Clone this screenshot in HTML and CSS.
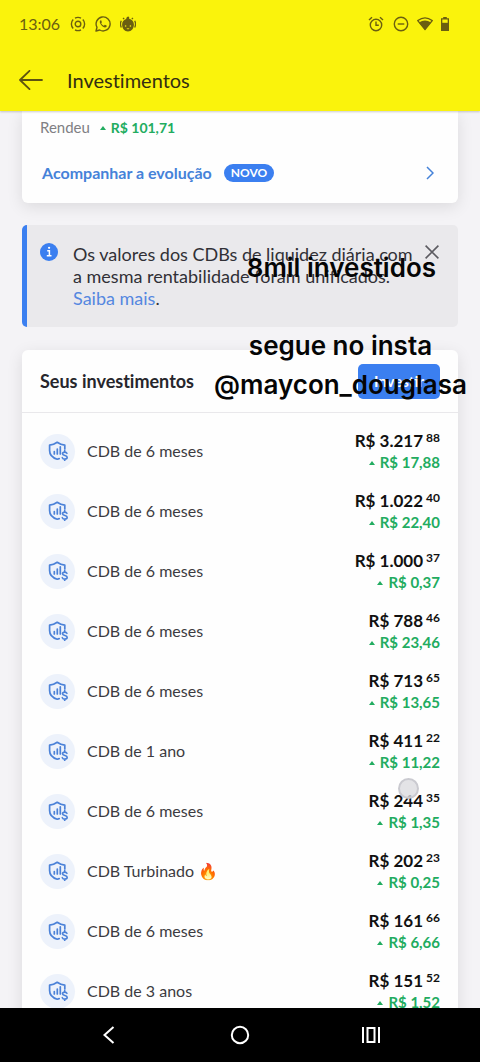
FILE: index.html
```html
<!DOCTYPE html>
<html lang="pt-BR">
<head>
<meta charset="utf-8">
<meta name="viewport" content="width=device-width, initial-scale=1">
<title>Investimentos</title>
<link rel="stylesheet" href="styles.css">
</head>
<body>
<svg class="sprite" aria-hidden="true">
  <symbol id="shield" viewBox="0 0 20 20">
    <path d="M16.800 8V4.200C14.200 4 11.600 3 9.200 1.300 6.800 3 4.200 4 1.600 4.200V9.500c0 4.300 2.500 7.200 7.600 8.700l2-.6" fill="none" stroke="currentColor" stroke-width="1.700" stroke-linecap="round" stroke-linejoin="round"/>
    <path d="M6.300 13v-2.500M9.300 13V8M12.300 13V5.800" fill="none" stroke="currentColor" stroke-width="1.700" stroke-linecap="round"/>
    <path d="M18.900 12.300c-.4-.9-1.300-1.200-2.200-1.200-1.300 0-2.200.7-2.200 1.700 0 2.400 4.700 1.200 4.700 3.500 0 1.100-1 1.800-2.400 1.800-1.100 0-2.100-.5-2.500-1.400M16.700 9.600v1.400M16.700 18.300v1.300" fill="none" stroke="currentColor" stroke-width="1.600" stroke-linecap="round"/>
  </symbol>
</svg>
<div class="app">
  <header class="top">
    <div class="status">
      <span class="clock">13:06</span>
      <svg class="s-icon" viewBox="0 0 16 16" fill="none" stroke="currentColor" stroke-width="1.400"><circle cx="8" cy="8" r="2.800"/><path d="M5 2.200a6.500 6.500 0 0 1 6 0M5 13.800a6.500 6.500 0 0 0 6 0M3.200 3.500a6.500 6.500 0 0 0 0 9M12.800 3.500a6.500 6.500 0 0 1 0 9"/></svg>
      <svg class="s-icon" viewBox="0 0 16 16"><path d="M1 15l1-3.700A7 7 0 1 1 4.700 14z" fill="none" stroke="currentColor" stroke-width="1.400" stroke-linejoin="round"/><path d="M5.700 4.300c-1.500.8-1.100 2.900.5 4.800s4 3.200 5.300 1.600c.5-.8.2-1.100-.4-1.400l-1.300-.6-.9 1c-1.300-.5-2.200-1.400-2.700-2.500l.7-.9-.6-1.700c-.1-.3-.4-.4-.6-.3z" fill="currentColor"/></svg>
      <svg class="s-icon" viewBox="0 0 16 16"><path d="M8.300.5c1.200.5 1 1.500.8 2.200 2.900.6 4.800 2.700 4.800 5.700 0 3.900-2.400 7-5.900 7s-5.900-3.100-5.900-7c0-3 1.700-4.800 4.100-5.500C6.300 1.700 7.200.8 8.300.5z" fill="currentColor"/><path d="M1.300 4.700Q-.4 8 1.300 11.500M14.700 4.700q1.700 3.300 0 6.800M3 3l1.200-1M13 3l-1.200-1" fill="none" stroke="currentColor" stroke-width="1.300"/><circle cx="5.600" cy="10" r=".8" fill="#faf30c"/><circle cx="10.400" cy="10" r=".8" fill="#faf30c"/><path d="M6.800 12.500q1.200.8 2.400 0" stroke="#faf30c" stroke-width=".8" fill="none"/></svg>
      <span class="spacer"></span>
      <svg class="s-icon" viewBox="0 0 16 16" fill="none" stroke="currentColor" stroke-width="1.400"><circle cx="8" cy="9" r="5.700"/><path d="M8 5.500V9.300h2.800M1 4l3-2.800M15 4l-3-2.800"/></svg>
      <svg class="s-icon s-dnd" viewBox="0 0 16 16" fill="none" stroke="currentColor" stroke-width="1.400"><circle cx="8" cy="8" r="6.700"/><path d="M4.700 8h6.600"/></svg>
      <svg class="s-icon" viewBox="0 0 16 16"><path d="M.8 4.600Q8-1 15.200 4.600L8 13.500z" fill="none" stroke="currentColor" stroke-width="1.300"/><path d="M2 6.500Q8 2.600 14 6.500L8 14z" fill="currentColor"/></svg>
      <svg class="s-batt" viewBox="0 0 10 16"><path d="M1 2.300h2.200V1h3.600v1.300H9V15H1z" fill="currentColor"/><path d="M2.300 3.500h5.400v3.300H2.300z" fill="#faf30c"/></svg>
    </div>
    <div class="bar">
      <button class="plain back" aria-label="Voltar"><svg viewBox="0 0 24 20" fill="none" stroke="currentColor" stroke-width="1.800" stroke-linecap="round" stroke-linejoin="round"><path d="M23 10H1M10.500.8L1 10l9.500 9.200"/></svg></button>
      <h1>Investimentos</h1>
    </div>
  </header>

  <main class="content">
    <section class="card summary">
      <p class="yield">Rendeu <span class="gain">R$ 101,71</span></p>
      <a class="evolution" href="#evolucao"><span>Acompanhar a evolução</span><span class="tag">NOVO</span><svg viewBox="0 0 8 14" fill="none" stroke="currentColor" stroke-width="1.500"><path d="M1 1l6 6-6 6"/></svg></a>
    </section>

    <aside class="notice">
      <svg class="info" viewBox="0 0 18 18"><circle cx="9" cy="9" r="9" fill="#3b7ff0"/><path d="M7.200 7.700h2.200v4.800M6.800 12.700h4.700" fill="none" stroke="#fff" stroke-width="1.500"/><circle cx="9.100" cy="4.800" r="1.100" fill="#fff"/></svg>
      <p>Os valores dos CDBs de liquidez diária com a mesma rentabilidade foram unificados. <a href="#saiba">Saiba mais</a>.</p>
      <button class="plain close" aria-label="Fechar"><svg viewBox="0 0 14 14" fill="none" stroke="currentColor" stroke-width="1.600"><path d="M.6.6l12.800 12.800M13.400.6L.6 13.400"/></svg></button>
    </aside>

    <section class="card list">
      <div class="list-head"><h2>Seus investimentos</h2><button class="invest">Investir</button></div>
      <ul>
        <li><span class="badge"><svg><use href="#shield"/></svg></span><span class="name">CDB de 6 meses</span><span class="values"><span class="amount">R$ 3.217<sup>88</sup></span><span class="gain">R$ 17,88</span></span></li>
        <li><span class="badge"><svg><use href="#shield"/></svg></span><span class="name">CDB de 6 meses</span><span class="values"><span class="amount">R$ 1.022<sup>40</sup></span><span class="gain">R$ 22,40</span></span></li>
        <li><span class="badge"><svg><use href="#shield"/></svg></span><span class="name">CDB de 6 meses</span><span class="values"><span class="amount">R$ 1.000<sup>37</sup></span><span class="gain">R$ 0,37</span></span></li>
        <li><span class="badge"><svg><use href="#shield"/></svg></span><span class="name">CDB de 6 meses</span><span class="values"><span class="amount">R$ 788<sup>46</sup></span><span class="gain">R$ 23,46</span></span></li>
        <li><span class="badge"><svg><use href="#shield"/></svg></span><span class="name">CDB de 6 meses</span><span class="values"><span class="amount">R$ 713<sup>65</sup></span><span class="gain">R$ 13,65</span></span></li>
        <li><span class="badge"><svg><use href="#shield"/></svg></span><span class="name">CDB de 1 ano</span><span class="values"><span class="amount">R$ 411<sup>22</sup></span><span class="gain">R$ 11,22</span></span></li>
        <li><span class="badge"><svg><use href="#shield"/></svg></span><span class="name">CDB de 6 meses</span><span class="values"><span class="amount">R$ 244<sup>35</sup></span><span class="gain">R$ 1,35</span><span class="touch"></span></span></li>
        <li><span class="badge"><svg><use href="#shield"/></svg></span><span class="name">CDB Turbinado <span class="emoji">🔥</span></span><span class="values"><span class="amount">R$ 202<sup>23</sup></span><span class="gain">R$ 0,25</span></span></li>
        <li><span class="badge"><svg><use href="#shield"/></svg></span><span class="name">CDB de 6 meses</span><span class="values"><span class="amount">R$ 161<sup>66</sup></span><span class="gain">R$ 6,66</span></span></li>
        <li><span class="badge"><svg><use href="#shield"/></svg></span><span class="name">CDB de 3 anos</span><span class="values"><span class="amount">R$ 151<sup>52</sup></span><span class="gain">R$ 1,52</span></span></li>
      </ul>
    </section>
    <p class="caption caption-total">8mil investidos</p>
    <p class="caption caption-follow">segue no insta<br>@maycon_douglasa</p>
  </main>

  <nav class="system">
    <button class="plain" aria-label="Voltar"><svg viewBox="0 0 20 20" fill="none" stroke="currentColor" stroke-width="2"><path d="M14.500 2L5.500 10l9 8"/></svg></button>
    <button class="plain" aria-label="Início"><svg viewBox="0 0 20 20" fill="none" stroke="currentColor" stroke-width="2"><circle cx="10" cy="10" r="8.200"/></svg></button>
    <button class="plain" aria-label="Recentes"><svg viewBox="0 0 20 20" fill="none" stroke="currentColor" stroke-width="2"><path d="M2 2v16M18 2v16M6.500 3h7v14h-7z"/></svg></button>
  </nav>
</div>
</body>
</html>
```
FILE: styles.css
```css
* { box-sizing: border-box; }
body, h1, h2, p, ul { margin: 0; padding: 0; }
body { font-family: Lato, "Liberation Sans", sans-serif; font-variant-ligatures: none; color: #222; background: #f4f3f6; }
svg { display: block; }
a { text-decoration: none; }
.sprite { position: absolute; width: 0; height: 0; }
.plain { border: 0; padding: 0; background: none; color: inherit; }

.app { display: flex; flex-direction: column; height: 100vh; overflow: hidden; }

.top { flex: none; padding: 14px 30px 7px 19px; background: #faf30c; position: relative; z-index: 1; box-shadow: 0 1px 2px #0003; }
.status { display: flex; align-items: center; height: 20px; gap: 9px; color: #6b5f10; }
.clock { font-size: 16px; line-height: 20px; margin-right: 1px; }
.s-icon { width: 16px; height: 16px; }
.s-dnd { margin-right: -1px; }
.s-batt { width: 10px; height: 16px; margin-left: -2px; }
.spacer { flex: 1; }
.bar { display: flex; align-items: center; height: 48px; margin-top: 22px; padding-bottom: 1px; gap: 24px; color: #5e5310; }
.back svg { width: 24px; height: 20px; }
h1 { font-size: 20px; line-height: 24px; font-weight: 400; color: #332e12; }

.content { flex: 1; min-height: 0; padding: 0 22px; overflow: hidden; position: relative; }
.card { background: #fefefe; box-shadow: 0 4px 16px #0000001a; }

.summary { padding: 6px 22px 20px 18px; border-radius: 0 0 6px 6px; }
.yield { font-size: 15px; line-height: 20px; color: #808084; }
.yield .gain { font-size: 14px; margin-left: 3px; }
.gain { color: #22ac60; font-weight: 700; white-space: nowrap; }
.gain::before { content: ""; display: inline-block; border: 3px solid transparent; border-top: 0; border-bottom: 4px solid currentColor; margin: 0 5px 3px 3px; }
.evolution { display: flex; align-items: center; margin: 25px 2px 0; font-size: 16px; line-height: 20px; font-weight: 700; color: #4582d9; }
.tag { margin-left: 12px; padding: 0 7px; border-radius: 9px; background: #3b7ff0; color: #fff; font-size: 12px; line-height: 18px; }
.evolution svg { width: 8px; height: 14px; margin-left: auto; }

.notice { display: flex; align-items: flex-start; margin-top: 22px; padding: 18px 19px 18px 13px; border-left: 5px solid #3b7ff0; border-radius: 5px; background: #eae9ec; }
.info { flex: none; width: 18px; height: 18px; }
.notice p { flex: 1; margin-left: 15px; font-size: 18px; line-height: 22px; color: #313036; }
.notice a { color: #5587e0; }
.close { flex: none; color: #5c5b61; margin-top: 2px; }
.close svg { width: 14px; height: 14px; }

.list { margin-top: 23px; border-radius: 6px; }
.list-head { display: flex; align-items: center; justify-content: space-between; height: 63px; padding: 0 18px; border-bottom: 1px solid #e9e8eb; }
h2 { font-size: 18px; line-height: 22px; font-weight: 700; color: #27262c; }
.invest { width: 82px; height: 35px; border: 0; border-radius: 5px; background: #3b7ff0; color: #fff; font: 700 15px/20px Lato, sans-serif; }
ul { list-style: none; padding: 8px 18px; }
li { display: flex; align-items: center; height: 60px; }
.badge { display: grid; place-items: center; width: 35px; height: 35px; border-radius: 50%; background: #edf2fb; color: #4c82d8; }
.badge svg { width: 20px; height: 20px; }
.name { flex: 1; margin-left: 12px; font-size: 16px; line-height: 20px; color: #3c3b41; }
.emoji { font-family: "Noto Color Emoji", sans-serif; }
.values { position: relative; text-align: right; display: grid; font-size: 15px; line-height: 20px; }
.amount { color: #111; font-size: 17px; line-height: 22px; font-weight: 700; }
sup { font-size: 12px; line-height: 12px; vertical-align: 5px; margin-left: 3px; }
.touch { position: absolute; right: 21px; top: -12px; width: 21px; height: 21px; border: 2px solid #cacad0; border-radius: 50%; background: #dcdce0cc; }

.caption { position: absolute; font: 600 26px/39px Inter, sans-serif; color: #050505; text-align: center; white-space: nowrap; pointer-events: none; }
.caption-total { top: 137px; right: 44px; }
.caption-follow { top: 215px; right: 13px; }

.system { flex: none; display: grid; grid-template-columns: repeat(3, 1fr); height: 54px; padding: 0 43px; background: #000; color: #fff; position: relative; }
.system button { display: grid; place-items: center; }
.system svg { width: 20px; height: 20px; }
```
